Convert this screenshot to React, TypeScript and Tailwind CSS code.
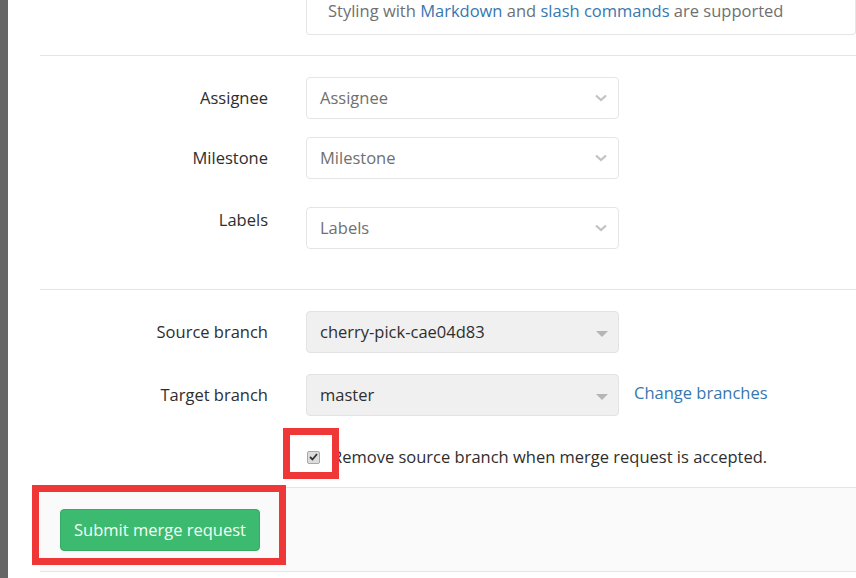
import React from 'react';

const font = { fontFamily: '"Open Sans", "Liberation Sans", sans-serif' };

const Chevron = () => (
  <svg width="14" height="8" viewBox="0 0 14 8" className="shrink-0">
    <polyline points="2,1.5 7,6 12,1.5" fill="none" stroke="#c2c2c2" strokeWidth="2.2" />
  </svg>
);

const Caret = () => (
  <span className="mt-[3px] h-0 w-0 border-x-[6px] border-t-[6px] border-x-transparent border-t-[#b5b5b5]" />
);

interface DropdownProps {
  value: string;
  placeholder?: boolean;
  disabled?: boolean;
}

const Dropdown: React.FC<DropdownProps> = ({ value, placeholder, disabled }) => (
  <div
    className={`flex h-[42px] w-[313px] items-center justify-between rounded-[4px] border pl-[13px] pr-[10px] ${
      disabled ? 'border-[#e3e3e3] bg-[#f0f0f0] text-[#2e2e2e]' : 'border-[#e5e5e5] bg-white'
    } ${placeholder ? 'text-[#707070]' : ''}`}
  >
    <span>{value}</span>
    {disabled ? <Caret /> : <Chevron />}
  </div>
);

const Row: React.FC<{ label: string; top?: boolean; children: React.ReactNode; className?: string }> = ({
  label,
  top,
  children,
  className,
}) => (
  <div className={`flex ${top ? 'items-start' : 'items-center'} ${className ?? ''}`}>
    <div className={`w-[228px] text-right text-[#2e2e2e] ${top ? 'pt-[1px]' : ''}`}>{label}</div>
    <div className="ml-[38px] flex items-center">{children}</div>
  </div>
);

export default function App() {
  return (
    <div className="relative flex h-[578px] w-[856px] overflow-hidden bg-white text-[16.5px]" style={font}>
      <div className="w-[8px] shrink-0 bg-[#666666]" />
      <div className="flex-1 pl-[32px]">
        {/* markdown hint box */}
        <div className="ml-[266px] flex h-[35px] items-start rounded-b-[4px] border-x border-b border-[#e5e5e5] pl-[21px] text-[#707070]">
          <span className="-mt-[2px] leading-[26px]">
            Styling with <span className="text-[#3777b0]">Markdown</span> and{' '}
            <span className="text-[#3777b0]">slash commands</span> are supported
          </span>
        </div>

        <div className="mt-[20px] h-px bg-[#e5e5e5]" />

        <Row label="Assignee" className="mt-[21px]">
          <Dropdown value="Assignee" placeholder />
        </Row>
        <Row label="Milestone" className="mt-[18px]">
          <Dropdown value="Milestone" placeholder />
        </Row>
        <Row label="Labels" top className="mt-[28px]">
          <Dropdown value="Labels" placeholder />
        </Row>

        <div className="mt-[40px] h-px bg-[#e5e5e5]" />

        <Row label="Source branch" className="mt-[21px]">
          <Dropdown value="cherry-pick-cae04d83" disabled />
        </Row>
        <Row label="Target branch" className="mt-[21px]">
          <Dropdown value="master" disabled />
          <a className="ml-[15px] -mt-[4px] text-[#3777b0]">Change branches</a>
        </Row>

        <div className="ml-[267px] mt-[34px] flex h-[14px] items-center">
          <span className="flex h-[13px] w-[13px] items-center justify-center rounded-[2px] border border-[#a8a8a8] bg-[#dcdcdc]">
            <svg width="9" height="8" viewBox="0 0 9 8">
              <polyline points="1,4 3.5,6.5 8,1" fill="none" stroke="#333" strokeWidth="1.8" />
            </svg>
          </span>
          <span className="ml-[12px] text-[#2e2e2e]">Remove source branch when merge request is accepted.</span>
        </div>

        <div className="mt-[23px] h-[85px] border-y border-[#e5e5e5] bg-[#fafafa] pl-[20px] pt-[21px]">
          <button className="flex h-[42px] w-[200px] items-center justify-center rounded-[4px] border border-[#36ab64] bg-[#3cba6f] text-[#f2fff6]">
            Submit merge request
          </button>
        </div>
      </div>

      {/* annotation boxes */}
      <div className="absolute left-[283px] top-[428px] h-[51px] w-[56px] border-[7px] border-[#f03737]" />
      <div className="absolute left-[32px] top-[485px] h-[80px] w-[254px] border-[7px] border-[#f03737]" />
    </div>
  );
}
